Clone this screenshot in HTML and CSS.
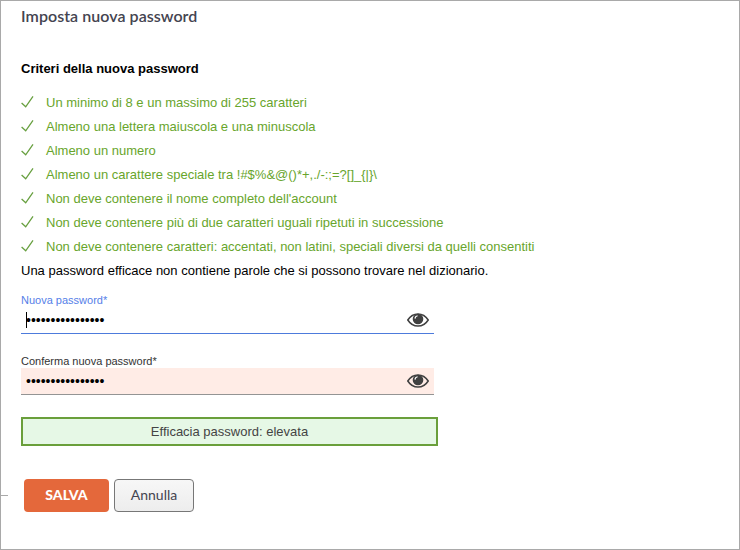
FILE: index.html
```html
<!DOCTYPE html>
<html lang="it">
<head>
  <meta charset="UTF-8">
  <meta name="viewport" content="width=device-width, initial-scale=1.0">
  <title>Imposta nuova password</title>
  <link rel="stylesheet" href="styles.css">
</head>
<body>
  <svg width="0" height="0" class="symbols">
    <symbol id="check" viewBox="0 0 14 12">
      <path d="M0.6 7 L4.7 10.8 L12 0.4" fill="none" stroke="#68a040" stroke-width="1.3"/>
    </symbol>
    <symbol id="eye" viewBox="0 0 22 14">
      <path d="M0.8 7 C3.4 2.8 7 0.9 11 0.9 S18.6 2.8 21.2 7 C18.6 11.2 15 13.1 11 13.1 S3.4 11.2 0.8 7 Z" fill="none" stroke="#404040" stroke-width="1.5"/>
      <circle cx="11" cy="6" r="5.3" fill="#404040"/>
      <path d="M8 5.6 Q8.2 3.2 10.6 2.8" fill="none" stroke="#fff" stroke-width="1.1"/>
    </symbol>
  </svg>

  <form class="container">
    <h1>Imposta nuova password</h1>
    <h2>Criteri della nuova password</h2>
    <ul class="criteria">
      <li><svg class="check"><use href="#check"/></svg><span>Un minimo di 8 e un massimo di 255 caratteri</span></li>
      <li><svg class="check"><use href="#check"/></svg><span>Almeno una lettera maiuscola e una minuscola</span></li>
      <li><svg class="check"><use href="#check"/></svg><span>Almeno un numero</span></li>
      <li><svg class="check"><use href="#check"/></svg><span>Almeno un carattere speciale tra !#$%&amp;@()*+,./-:;=?[]_{|}\</span></li>
      <li><svg class="check"><use href="#check"/></svg><span>Non deve contenere il nome completo dell'account</span></li>
      <li><svg class="check"><use href="#check"/></svg><span>Non deve contenere più di due caratteri uguali ripetuti in successione</span></li>
      <li><svg class="check"><use href="#check"/></svg><span>Non deve contenere caratteri: accentati, non latini, speciali diversi da quelli consentiti</span></li>
    </ul>
    <p class="hint">Una password efficace non contiene parole che si possono trovare nel dizionario.</p>

    <div class="field active">
      <label for="newPassword">Nuova password*</label>
      <div class="input-row">
        <span class="caret"></span>
        <input type="password" id="newPassword" value="Password12345678">
        <svg class="eye"><use href="#eye"/></svg>
      </div>
    </div>

    <div class="field confirm">
      <label for="confirmPassword">Conferma nuova password*</label>
      <div class="input-row">
        <input type="password" id="confirmPassword" value="Password12345678">
        <svg class="eye"><use href="#eye"/></svg>
      </div>
    </div>

    <div class="strength">Efficacia password: elevata</div>

    <div class="buttons">
      <span class="dash"></span>
      <button type="button" class="save">SALVA</button>
      <button type="button" class="cancel">Annulla</button>
    </div>
  </form>
</body>
</html>
```
FILE: styles.css
```css
* {
  box-sizing: border-box;
}
body {
  margin: 0;
  background: #fff;
  font-family: "Liberation Sans", Arial, sans-serif;
  font-size: 13px;
  color: #000;
}
.symbols {
  position: absolute;
}
.container {
  height: 550px;
  padding: 4px 20px 0;
  border: 1px solid #a9a9a9;
  overflow: hidden;
}
h1 {
  margin: 0;
  font-family: Lato, sans-serif;
  font-size: 16px;
  font-weight: 600;
  line-height: 22px;
  letter-spacing: 0.05px;
  color: #444450;
}
h2 {
  margin: 30px 0 10px;
  font-size: 13px;
  line-height: 24px;
}
.criteria {
  margin: 0;
  padding: 0;
  list-style: none;
  color: #68a52c;
}
.criteria li {
  display: flex;
  height: 24px;
  line-height: 24px;
}
.check {
  width: 14px;
  height: 12px;
  margin: 5px 11px 0 0;
}
.hint {
  margin: 0;
  line-height: 24px;
}
.field {
  width: 413px;
  margin-top: 10px;
}
.field label {
  display: block;
  height: 14px;
  font-size: 11px;
  line-height: 14px;
  color: #333;
}
.input-row {
  position: relative;
  display: flex;
  align-items: center;
  height: 27px;
  padding: 0 5px;
  border-bottom: 1px solid #949494;
}
.input-row input {
  flex: 1;
  padding: 0;
  border: none;
  outline: none;
  background: transparent;
  font-family: "Liberation Sans", Arial, sans-serif;
  font-size: 14px;
  color: #000;
}
.eye {
  width: 22px;
  height: 14px;
}
.active label {
  color: #5580e8;
}
.active .input-row {
  border-bottom-color: #4d7bdc;
}
.caret {
  position: absolute;
  left: 5px;
  top: 5px;
  width: 1px;
  height: 16px;
  background: #000;
}
.confirm {
  margin-top: 20px;
}
.confirm .input-row {
  background: #ffece6;
}
.strength {
  width: 417px;
  height: 29px;
  margin-top: 22px;
  border: 2px solid #6a9f3b;
  background: #e6f8e6;
  line-height: 25px;
  text-align: center;
  color: #444;
}
.buttons {
  position: relative;
  display: flex;
  gap: 5px;
  margin-top: 33px;
  padding-left: 3px;
}
.buttons button {
  height: 33px;
  padding: 0 0 2px;
  border-radius: 4px;
  font-family: Lato, sans-serif;
  font-size: 14px;
}
.save {
  width: 85px;
  border: none;
  background: #e4683b;
  color: #fff;
  font-weight: 900;
}
.cancel {
  width: 80px;
  border: 1px solid #777;
  background: linear-gradient(#f7f7f7, #ededed);
  color: #444450;
}
.dash {
  position: absolute;
  left: -20px;
  top: 16px;
  width: 7px;
  height: 1px;
  background: #a9a9a9;
}
```
